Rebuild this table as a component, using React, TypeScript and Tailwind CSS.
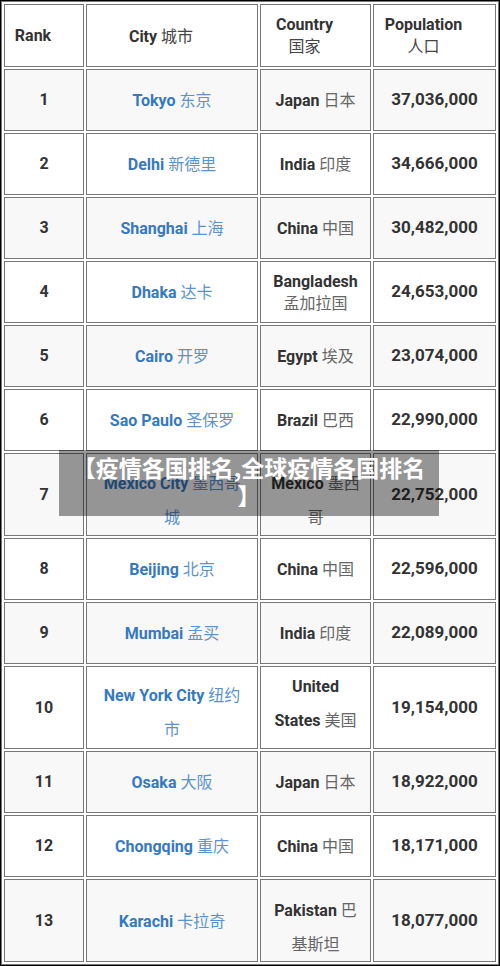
import React from "react";

type Row = {
  rank: number;
  city: string;
  cityZh: React.ReactNode;
  country: React.ReactNode;
  countryZh: React.ReactNode;
  pop: string;
  tall?: boolean;
  cityPad?: string;
  countryPad?: string;
  countryLead?: string;
};

const ROWS: Row[] = [
  { rank: 1, city: "Tokyo", cityZh: "东京", country: "Japan", countryZh: "日本", pop: "37,036,000" },
  { rank: 2, city: "Delhi", cityZh: "新德里", country: "India", countryZh: "印度", pop: "34,666,000" },
  { rank: 3, city: "Shanghai", cityZh: "上海", country: "China", countryZh: "中国", pop: "30,482,000" },
  {
    rank: 4,
    city: "Dhaka",
    cityZh: "达卡",
    country: (
      <>
        Bangladesh
        <br />
      </>
    ),
    countryZh: "孟加拉国",
    pop: "24,653,000",
    countryLead: "leading-[21px]",
  },
  { rank: 5, city: "Cairo", cityZh: "开罗", country: "Egypt", countryZh: "埃及", pop: "23,074,000" },
  { rank: 6, city: "Sao Paulo", cityZh: "圣保罗", country: "Brazil", countryZh: "巴西", pop: "22,990,000" },
  {
    rank: 7,
    city: "Mexico City",
    cityZh: (
      <>
        墨西哥
        <br />城
      </>
    ),
    country: "Mexico",
    countryZh: (
      <>
        墨西
        <br />哥
      </>
    ),
    pop: "22,752,000",
    tall: true,
    cityPad: "pt-[10px]",
    countryPad: "pt-[10px]",
  },
  { rank: 8, city: "Beijing", cityZh: "北京", country: "China", countryZh: "中国", pop: "22,596,000" },
  { rank: 9, city: "Mumbai", cityZh: "孟买", country: "India", countryZh: "印度", pop: "22,089,000" },
  {
    rank: 10,
    city: "New York City",
    cityZh: (
      <>
        纽约
        <br />市
      </>
    ),
    country: (
      <>
        United
        <br />
        States
      </>
    ),
    countryZh: "美国",
    pop: "19,154,000",
    tall: true,
    cityPad: "pt-[9px]",
    countryPad: "pb-[8px]",
  },
  { rank: 11, city: "Osaka", cityZh: "大阪", country: "Japan", countryZh: "日本", pop: "18,922,000" },
  { rank: 12, city: "Chongqing", cityZh: "重庆", country: "China", countryZh: "中国", pop: "18,171,000" },
  {
    rank: 13,
    city: "Karachi",
    cityZh: "卡拉奇",
    country: "Pakistan",
    countryZh: (
      <>
        巴
        <br />
        基斯坦
      </>
    ),
    pop: "18,077,000",
    tall: true,
    countryPad: "pt-[12px]",
  },
];

const cell = "border border-[#777] px-2 text-center align-middle";
const head = "border border-[#777] pl-2 pr-[30px] text-center align-middle font-bold text-[#333]";
const zh = "font-['Noto_Sans_CJK_SC',sans-serif] font-normal";

export default function App() {
  return (
    <div className="relative w-[500px] h-[966px] bg-black p-[1px] font-['Roboto','Noto_Sans_CJK_SC',sans-serif] text-[16px]">
      <table className="w-[498px] table-fixed border-separate border-spacing-[2px] border border-[#777] bg-white">
        <colgroup>
          <col className="w-[80px]" />
          <col className="w-[172px]" />
          <col className="w-[111px]" />
          <col className="w-[123px]" />
        </colgroup>
        <thead>
          <tr className="h-[63px] bg-white">
            <th className={head}>Rank</th>
            <th className={head}>
              City <span className={`${zh} text-[#444]`}>城市</span>
            </th>
            <th className={`${head} leading-[21px]`}>
              Country
              <br />
              <span className={`${zh} text-[#444]`}>国家</span>
            </th>
            <th className={`${head} leading-[21px]`}>
              Population
              <br />
              <span className={`${zh} text-[#444]`}>人口</span>
            </th>
          </tr>
        </thead>
        <tbody>
          {ROWS.map((r) => (
            <tr
              key={r.rank}
              className={`${r.tall ? "h-[83px]" : "h-[62px]"} ${r.rank % 2 ? "bg-[#f8f8f8]" : "bg-white"}`}
            >
              <td className={`${cell} font-bold text-[#333]`}>{r.rank}</td>
              <td className={`${cell} leading-[32px]`}>
                <div className={r.cityPad ?? ""}>
                  <span className="font-bold text-[#3679bf]">{r.city}</span>{" "}
                  <span className={`${zh} text-[#5b93cf]`}>{r.cityZh}</span>
                </div>
              </td>
              <td className={`${cell} ${r.countryLead ?? "leading-[32px]"}`}>
                <div className={r.countryPad ?? ""}>
                  <span className="font-bold text-[#333]">{r.country}</span>{" "}
                  <span className={`${zh} text-[#666]`}>{r.countryZh}</span>
                </div>
              </td>
              <td className={`${cell} font-bold text-[#333] text-[17px]`}>{r.pop}</td>
            </tr>
          ))}
        </tbody>
      </table>

      <div className="absolute left-[59px] top-[450px] w-[380px] h-[66px] bg-black/40 pb-[4px] flex items-center justify-center">
        <p className="text-center text-white font-bold text-[23px] leading-[28px] font-['Noto_Sans_CJK_SC',sans-serif]">
          【疫情各国排名,全球疫情各国排名
          <br />】
        </p>
      </div>
    </div>
  );
}
